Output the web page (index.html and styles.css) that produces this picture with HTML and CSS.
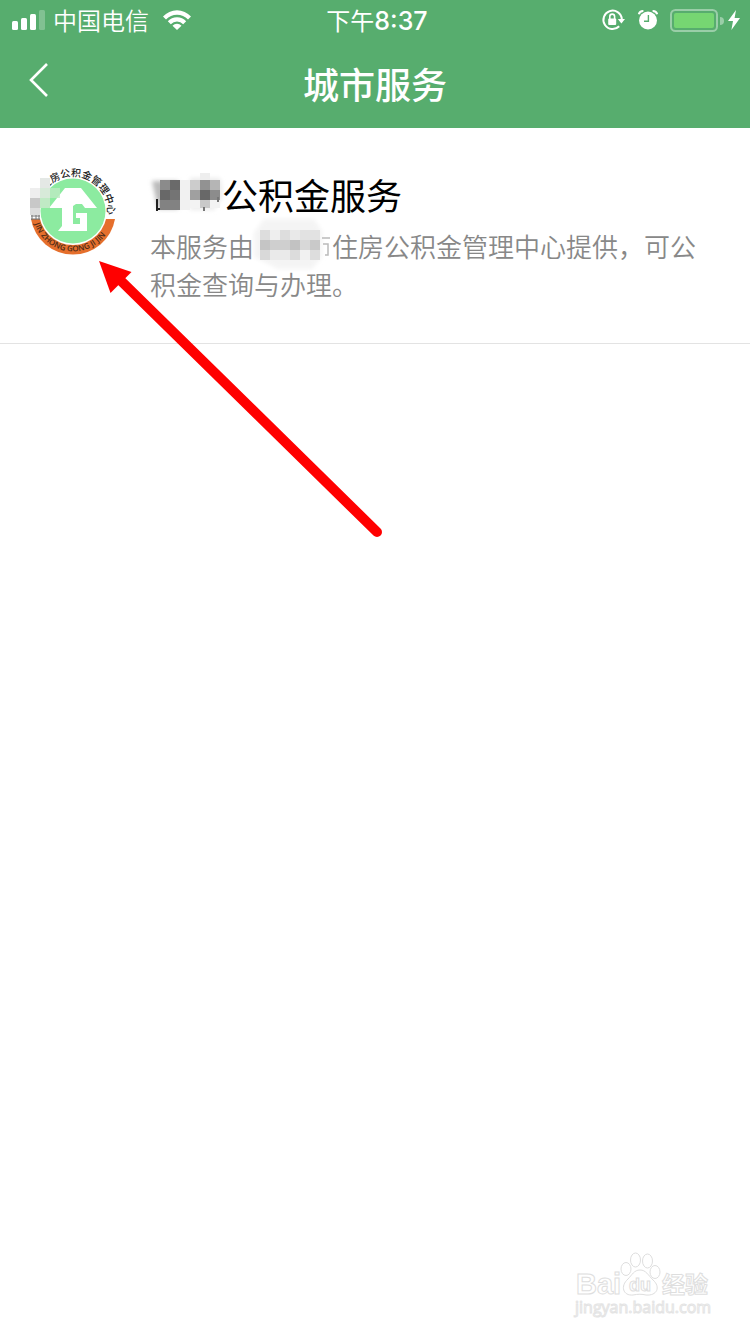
FILE: index.html
```html
<!DOCTYPE html>
<html lang="zh-CN">
<head>
<meta charset="utf-8">
<meta name="viewport" content="width=device-width, initial-scale=1">
<title>城市服务</title>
<link rel="stylesheet" href="styles.css">
</head>
<body>
<div class="screen">
  <header class="header">
    <div class="status">
      <div class="status-side">
        <svg class="signal" width="34" height="20" viewBox="0 0 34 20" fill="#fff" aria-hidden="true">
          <rect x="0" y="11" width="6" height="9" rx="1.5"/>
          <rect x="9" y="8" width="6" height="12" rx="1.5"/>
          <rect x="18" y="4" width="6" height="16" rx="1.5"/>
          <rect x="27" y="0" width="6" height="20" rx="1.5" opacity=".25"/>
        </svg>
        <span class="carrier">中国电信</span>
        <svg class="wifi" width="28" height="20" viewBox="0 0 28 20" aria-hidden="true">
          <path d="M0 6.500A19 19 0 0 1 28 6.500L25 9.500A15 15 0 0 0 3 9.500Z" fill="#fff"/>
          <path d="M4.800 11.200A12.800 12.800 0 0 1 23.200 11.200L20.200 14.200A8.700 8.700 0 0 0 7.800 14.200Z" fill="#fff"/>
          <path d="M9.500 15.700A6.300 6.300 0 0 1 18.500 15.700L14 20Z" fill="#fff"/>
        </svg>
      </div>
      <div class="clock">下午<span class="digits">8:37</span></div>
      <div class="status-side status-right">
        <svg width="24" height="22" viewBox="0 0 24 22" aria-hidden="true">
          <path d="M17.2 17.3A9.2 9.2 0 1 1 19.8 10" fill="none" stroke="#fff" stroke-width="2"/>
          <path d="M15.8 10H23L19.4 14.4Z" fill="#fff"/>
          <rect x="6.2" y="9.5" width="8" height="6.5" rx="1" fill="#fff"/>
          <path d="M7.8 10V7.5a2.4 2.4 0 0 1 4.8 0V10" fill="none" stroke="#fff" stroke-width="1.6"/>
        </svg>
        <svg class="alarm" width="20" height="20" viewBox="0 0 20 20" aria-hidden="true">
          <circle cx="10" cy="10.5" r="9" fill="#fff"/>
          <path d="M.8 4.3A4.5 4.5 0 0 1 5.4.9M14.6.9A4.5 4.5 0 0 1 19.2 4.3" fill="none" stroke="#fff" stroke-width="2"/>
          <path d="M10.4 5V11.3H6" fill="none" stroke="#57ad6e" stroke-width="1.4"/>
        </svg>
        <svg class="battery" width="53" height="24" viewBox="0 0 53 24" aria-hidden="true">
          <rect x="1" y="2" width="46" height="21" rx="4.5" fill="none" stroke="#fff" stroke-opacity=".4" stroke-width="2"/>
          <rect x="4" y="5" width="40" height="15" rx="2" fill="#76d672"/>
          <path d="M50 9a4 4 0 0 1 0 8Z" fill="#fff" opacity=".4"/>
        </svg>
        <svg class="bolt" width="12" height="20" viewBox="0 0 12 20" aria-hidden="true">
          <path d="M8 0L0 11H5L3.4 20L12 8H6.6Z" fill="#fff"/>
        </svg>
      </div>
    </div>
    <nav class="navbar">
      <button class="back" type="button" aria-label="返回">
        <svg width="20" height="36" viewBox="0 0 20 36" aria-hidden="true"><path d="M18 2L2 18L18 34" fill="none" stroke="#fff" stroke-width="2.6"/></svg>
      </button>
      <h1 class="title">城市服务</h1>
    </nav>
  </header>
  <main>
    <a class="service" href="#">
      <svg class="logo" width="90" height="90" viewBox="0 0 90 90" aria-hidden="true">
        <defs>
          <path id="top-arc" d="M10.500 45A34.500 34.500 0 0 1 79.500 45A34.500 34.500 0 0 1 72 66"/>
          <path id="bottom-arc" d="M4.500 45A40.500 40.500 0 0 0 85.500 45"/>
        </defs>
        <path d="M3 53A42.600 42.600 0 0 0 87 53Z" fill="#e56f2c"/>
        <circle cx="45" cy="45" r="34" fill="#fff"/>
        <circle cx="45" cy="45" r="32.5" fill="#8ceba0"/>
        <text class="logo-cn"><textPath href="#top-arc" startOffset="22">住房公积金管理中心</textPath></text>
        <text class="logo-en"><textPath href="#bottom-arc" startOffset="13">JIN ZHONG GONG JI JIN</textPath></text>
        <path d="M37 22L21 42H34V60L30 65H59V47H48V52H52V58H45V40L48 38H54L57 42H69L53 22Z" fill="#fff"/>
        <g>
          <path d="M2 22h10v10H2z" fill="#eee"/><path d="M12 12h10v10H12z" fill="#e4e8e5"/>
          <path d="M12 22h10v10H12z" fill="#d7ead9"/><path d="M22 22h10v10H22z" fill="#bdebc3" opacity=".8"/>
          <path d="M2 32h10v10H2z" fill="#c8c8c8"/><path d="M12 32h10v10H12z" fill="#c0eac5"/>
          <path d="M2 42h10v7H2z" fill="#ddd"/>
          <path d="M3 50h9M3 53h9M4 49v5M8 49v5M11 49v5" stroke="#777" stroke-width="1"/>
        </g>
      </svg>
      <div class="service-text">
        <h2 class="service-name"><svg class="mask-name" width="72" height="44" viewBox="0 0 72 44" role="img" aria-label="已遮挡">
            <defs><filter id="soft" x="-20%" y="-20%" width="140%" height="140%"><feGaussianBlur stdDeviation="2"/></filter></defs>
            <path d="M2 8h26v28H8z" fill="#bbb" filter="url(#soft)"/>
            <path d="M40 5h30l2 8v12l-8 12H40z" fill="#ececec" filter="url(#soft)"/>
            <path d="M7 26v12M7 36h17" stroke="#222" stroke-width="2"/>
            <path d="M10 7h10v10H10z" fill="#8b8b8b"/><path d="M20 7h10v10H20z" fill="#6a6a6a"/>
            <path d="M10 17h10v10H10z" fill="#686868"/><path d="M20 17h10v10H20z" fill="#747474"/>
            <path d="M10 27h20v10H10z" fill="#828282"/>
            <path d="M30 7h10v30H30z" fill="#f1f1f1"/><path d="M40 7h10v10H40z" fill="#ccc"/>
            <path d="M50 0h10v7H50z" fill="#eee"/><path d="M50 7h10v10H50z" fill="#929292"/><path d="M60 7h10v10H60z" fill="#b5b5b5"/>
            <path d="M40 17h10v10H40z" fill="#a0a0a0"/><path d="M50 17h10v10H50z" fill="#686868"/><path d="M60 17h10v10H60z" fill="#8c8c8c"/>
            <path d="M40 27h30v8H40z" fill="#f3f3f3"/><path d="M50 27h10v8H50z" fill="#c9c9c9"/>
            <path d="M54 34v4M68 24v5" stroke="#777" stroke-width="2"/>
          </svg>公积金服务</h2>
        <p class="service-desc">本服务由<svg class="mask-desc" width="78" height="38" viewBox="0 0 78 38" role="img" aria-label="已遮挡">
            <path d="M10 -8h50l8 12v26l-10 12H24L0 30V6z" fill="#f4f4f4" filter="url(#soft)"/>
            <path d="M6 3h10v10H6z" fill="#ddd"/><path d="M16 3h10v10H16z" fill="#eee"/><path d="M26 3h10v10H26z" fill="#ddd"/><path d="M36 3h10v10H36z" fill="#e9e9e9"/><path d="M46 3h20v10H46z" fill="#e2e2e2"/>
            <path d="M6 13h10v10H6z" fill="#c5c5c5"/><path d="M16 13h20v10H16z" fill="#cfcfcf"/><path d="M36 13h10v10H36z" fill="#c2c2c2"/><path d="M46 13h10v10H46z" fill="#d8d8d8"/><path d="M56 13h10v10H56z" fill="#c9c9c9"/>
            <path d="M6 23h10v10H6z" fill="#d9d9d9"/><path d="M16 23h20v10H16z" fill="#eaeaea"/><path d="M36 23h10v10H36z" fill="#dcdcdc"/><path d="M46 23h10v10H46z" fill="#f1f1f1"/><path d="M56 23h10v10H56z" fill="#ddd"/>
            <path d="M68 11h8M69 17h5v11h-3" fill="none" stroke="#bbb" stroke-width="1.5"/>
          </svg>住房公积金管理中心提供，可公积金查询与办理。</p>
      </div>
    </a>
  </main>
  <svg class="pointer" width="290" height="284" viewBox="0 0 290 284" aria-hidden="true">
    <path d="M20 19L282 276" stroke="#f00" stroke-width="10" stroke-linecap="round"/>
    <path d="M4 5L36.500 16L15.500 37Z" fill="#f00"/>
  </svg>
  <footer class="watermark">
    <svg width="150" height="70" viewBox="0 0 150 70" role="img" aria-label="Baidu经验 jingyan.baidu.com">
      <g class="wm-outline">
        <text class="wm-baidu" x="4" y="44">Bai</text>
        <ellipse cx="54" cy="19" rx="5" ry="6.500"/><ellipse cx="63.500" cy="10" rx="5" ry="7"/><ellipse cx="75.500" cy="11" rx="5" ry="7"/><ellipse cx="83" cy="22" rx="5" ry="6.500"/>
        <path d="M68 20C62 20 60 25 56 29C48 36 51 46 61 45C66 44 70 44 74 45C85 46 89 37 81 30C76 25 74 20 68 20Z"/>
        <text class="wm-du" x="57" y="41">du</text>
        <text class="wm-cn" x="90" y="43">经验</text>
        <text class="wm-url" x="3" y="63">jingyan.baidu.com</text>
      </g>
    </svg>
  </footer>
</div>
</body>
</html>
```
FILE: styles.css
```css
* { box-sizing: border-box; }
body {
  margin: 0;
  background: #fff;
  font-family: "Noto Sans CJK SC", sans-serif;
  color: #000;
}
h1, h2, p { margin: 0; font-weight: 400; }
svg { display: block; flex: none; overflow: visible; }
.screen {
  position: relative;
  min-height: 100vh;
  display: flex;
  flex-direction: column;
}
.header { background: #57ad6e; color: #fff; }
.status {
  display: grid;
  grid-template-columns: 1fr auto 1fr;
  align-items: center;
  height: 40px;
  padding: 0 10px 0 12px;
}
.status-side { display: flex; align-items: center; }
.status-right { justify-content: flex-end; }
.carrier { margin-left: 7px; font-size: 24px; font-weight: 350; line-height: 38px; }
.wifi { margin-left: 14px; }
.clock { padding-left: 2px; font-size: 24px; line-height: 38px; }
.digits { font-family: Inter, sans-serif; font-size: 25px; font-weight: 500; }
.alarm { margin-left: 12px; }
.battery { margin-left: 12px; }
.bolt { margin-left: 5px; }
.navbar {
  display: grid;
  grid-template-columns: 1fr auto 1fr;
  align-items: center;
  height: 88px;
  padding-bottom: 2px;
}
.back {
  justify-self: start;
  padding: 0 29px 6px;
  border: 0;
  background: none;
}
.title { font-size: 36px; line-height: 86px; font-weight: 500; }
.service {
  display: flex;
  gap: 32px;
  padding: 38px 30px 40px 28px;
  border-bottom: 1px solid #e3e3e3;
  color: inherit;
  text-decoration: none;
}
.service-text { flex: 1; min-width: 0; }
.service-name { height: 61px; font-size: 36px; line-height: 56px; }
.service-desc { color: #888; font-size: 26px; line-height: 38px; font-weight: 350; }
.mask-name, .mask-desc { display: inline-block; }
.mask-name { vertical-align: -7px; }
.mask-desc { vertical-align: top; }
.logo-cn { font-size: 10px; font-weight: 500; fill: #222; }
.logo-en { font-family: "Open Sans", sans-serif; font-size: 8px; font-weight: 600; fill: #4b2b18; }
.pointer { position: absolute; left: 95px; top: 256px; pointer-events: none; }
.watermark {
  margin-top: auto;
  display: flex;
  justify-content: flex-end;
  padding: 0 28px 14px 0;
}
.wm-outline { fill: #fff; stroke: #dedede; stroke-width: 1; }
.wm-baidu { font: 700 29px "Liberation Sans", sans-serif; }
.wm-du { font: 700 18px "Liberation Sans", sans-serif; }
.wm-cn { font-size: 23px; font-weight: 700; }
.wm-url { font: 400 16px "Open Sans", sans-serif; stroke: #e4e4e4; }
```
